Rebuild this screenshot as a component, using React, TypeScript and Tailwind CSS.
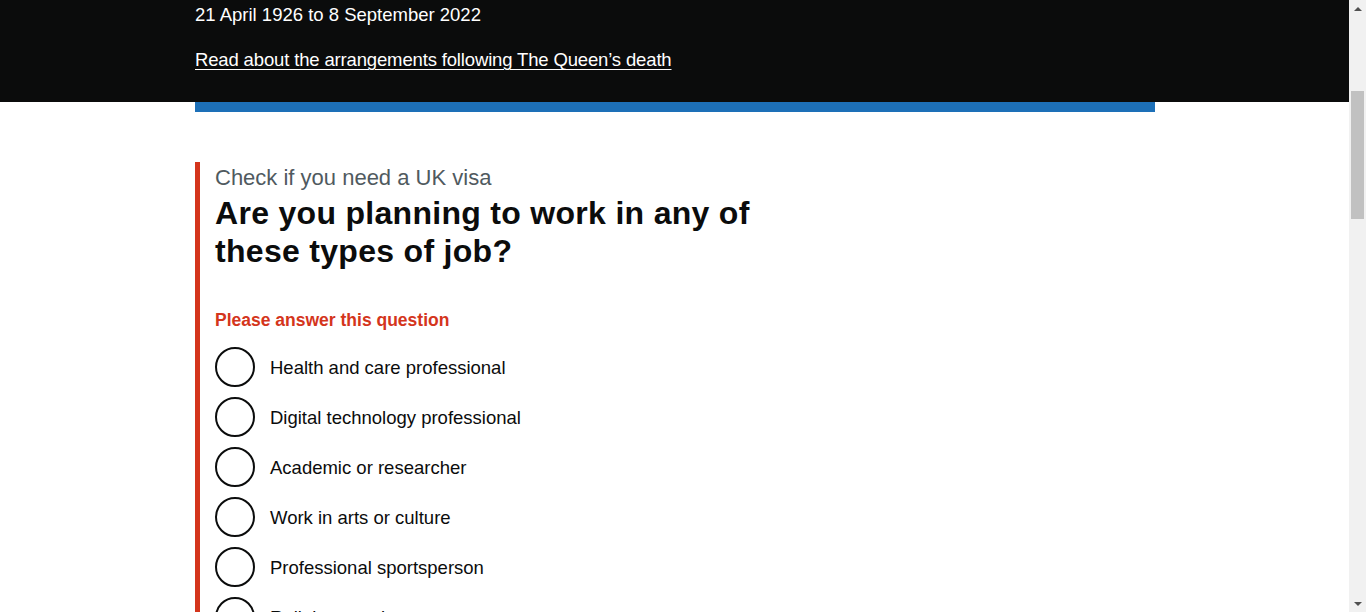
const options = [
  "Health and care professional",
  "Digital technology professional",
  "Academic or researcher",
  "Work in arts or culture",
  "Professional sportsperson",
  "Religious worker",
];

export default function App() {
  return (
    <div className="flex h-[612px] overflow-hidden bg-white font-['Liberation_Sans',Arial,sans-serif] text-[#0b0c0c]">
      <div className="min-w-0 flex-1">
        <Banner />
        <div className="ml-[195px] w-[960px]">
          <div className="h-[10px] bg-[#1d70b8]" />
          <main className="pt-[50px]">
            <Question />
          </main>
        </div>
      </div>
      <Scrollbar />
    </div>
  );
}

function Banner() {
  return (
    <div className="h-[102px] bg-[#0b0c0c]">
      <div className="ml-[195px] w-[960px] pt-[2px] text-white">
        <p className="text-[18.5px] leading-[25px]">21 April 1926 to 8 September 2022</p>
        <a
          href="#"
          className="mt-[20px] inline-block text-[18.5px] leading-[25px] tracking-[-0.15px] underline decoration-1 underline-offset-[3px]"
        >
          Read about the arrangements following The Queen’s death
        </a>
      </div>
    </div>
  );
}

function Question() {
  return (
    <div className="border-l-[5px] border-[#d4351c] pl-[15px] pt-[3px]">
      <span className="block text-[22px] leading-[25px] text-[#505a5f]">Check if you need a UK visa</span>
      <h1 className="mt-[4px] max-w-[610px] text-[32px] font-bold leading-[38px] tracking-[0.3px]">
        Are you planning to work in any of these types of job?
      </h1>
      <p className="mt-[38px] text-[17.5px] font-bold leading-[25px] text-[#d4351c]">
        Please answer this question
      </p>
      <div className="mt-[14px] flex flex-col gap-[10px]">
        {options.map((o) => (
          <Radio key={o} label={o} />
        ))}
      </div>
    </div>
  );
}

function Radio({ label }: { label: string }) {
  return (
    <label className="flex items-center gap-[15px]">
      <span className="h-[40px] w-[40px] shrink-0 rounded-full border-2 border-[#0b0c0c]" />
      <span className="text-[18.5px] leading-[25px]">{label}</span>
    </label>
  );
}

function Scrollbar() {
  return (
    <div className="flex w-[17px] shrink-0 flex-col bg-[#f1f1f1]">
      <div className="flex h-[17px] items-center justify-center">
        <svg width="8" height="4" viewBox="0 0 8 4">
          <path d="M0 4 L4 0 L8 4 Z" fill="#505050" />
        </svg>
      </div>
      <div className="mx-[2px] mt-[74px] h-[128px] bg-[#c1c1c1]" />
      <div className="flex-1" />
      <div className="flex h-[17px] items-center justify-center">
        <svg width="8" height="4" viewBox="0 0 8 4">
          <path d="M0 0 L8 0 L4 4 Z" fill="#505050" />
        </svg>
      </div>
    </div>
  );
}
